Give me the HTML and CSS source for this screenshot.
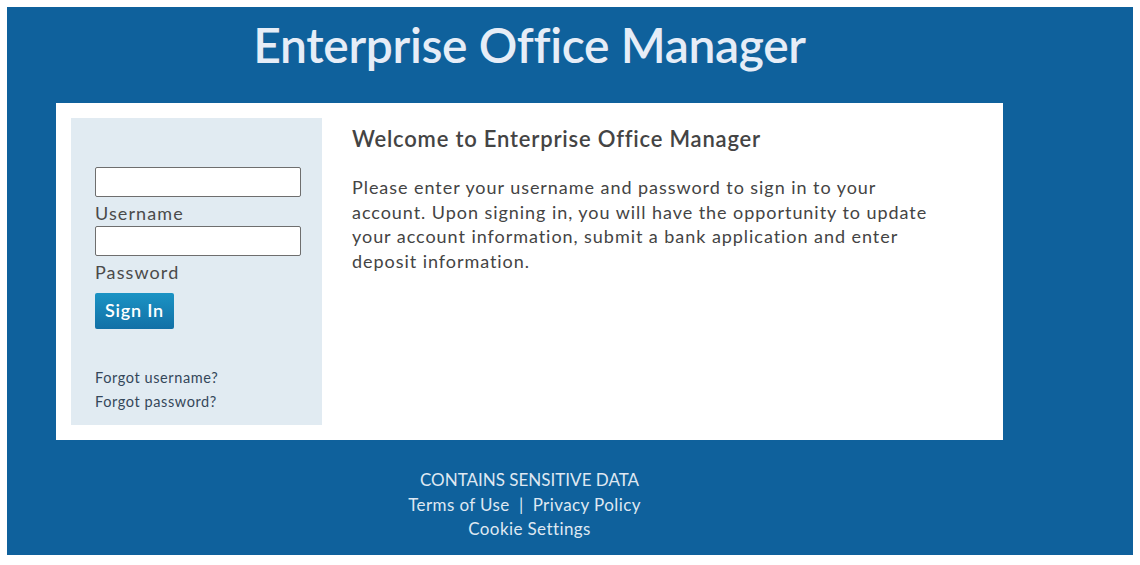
FILE: index.html
```html
<!doctype html>
<html>
<head>
<meta charset="utf-8">
<link rel="stylesheet" href="styles.css">
<title>Enterprise Office Manager</title>
</head>
<body>
<div class="page">
  <div class="wrap">
    <h1 class="masthead">Enterprise Office Manager</h1>

    <div class="card">
      <form class="login">
        <input class="field" type="text" id="username">
        <label for="username">Username</label>
        <input class="field" type="password" id="password">
        <label for="password">Password</label>
        <button class="btn" type="button">Sign In</button>
        <ul class="forgot">
          <li><a href="#">Forgot username?</a></li>
          <li><a href="#">Forgot password?</a></li>
        </ul>
      </form>

      <div class="welcome">
        <h2>Welcome to Enterprise Office Manager</h2>
        <p>Please enter your username and password to sign in to your
        account. Upon signing in, you will have the opportunity to update
        your account information, submit a bank application and enter
        deposit information.</p>
      </div>
    </div>

    <div class="footer">
      <div>CONTAINS SENSITIVE DATA</div>
      <div class="links"><a href="#">Terms of Use</a> <span class="sep">|</span> <a href="#">Privacy Policy</a></div>
      <div><a href="#">Cookie Settings</a></div>
    </div>
  </div>
</div>
</body>
</html>
```

FILE: styles.css
```css
h1,
h2,
p,
ul {
    margin: 0;
    padding: 0;
}
body {
    margin: 7px 7px 10px 7px;
    font-family: Lato, "Open Sans", sans-serif;
    color: #444;
}
.page {
    background: #0f619c;
    height: 548px;
}
.wrap {
    width: 947px;
    margin-left: 49px;
}
.masthead {
    color: #e6edf7;
    font-size: 48px;
    font-weight: 600;
    letter-spacing: -0.35px;
    line-height: 58px;
    text-align: center;
    padding: 9px 0 29px;
}
.card {
    display: flex;
    background: #fff;
    padding: 15px;
    height: 307px;
}
.login {
    width: 251px;
    box-sizing: border-box;
    background: #e1ebf2;
    padding: 49px 21px 0 24px;
    display: flex;
    flex-direction: column;
    align-items: flex-start;
}
.field {
    width: 206px;
    height: 30px;
    box-sizing: border-box;
    margin: 0;
    border: 1px solid #6e6e6e;
    border-radius: 2px;
    background: #fff;
}
.login label {
    font-size: 18px;
    letter-spacing: 1.1px;
    line-height: 26px;
    padding-top: 3px;
    color: #4a4a4a;
}
.btn {
    margin-top: 8px;
    width: 79px;
    height: 36px;
    border: 0;
    border-radius: 2px;
    background: linear-gradient(#1b93c4, #1270a6);
    color: #fff;
    font-family: Lato, sans-serif;
    font-size: 18px;
    font-weight: 600;
    letter-spacing: 0.8px;
    padding: 0 0 3px;
}
.forgot {
    list-style: none;
    margin-top: 37px;
}
.forgot li {
    font-size: 14.5px;
    letter-spacing: 0.6px;
    line-height: 24px;
}
.forgot a {
    color: #34475a;
    text-decoration: none;
}
.welcome {
    flex: 1;
    padding: 6px 30px 0 30px;
}
.welcome h2 {
    font-size: 22px;
    font-weight: 600;
    letter-spacing: 0.8px;
    color: #444;
    line-height: 30px;
    margin-bottom: 21px;
}
.welcome p {
    font-size: 18px;
    letter-spacing: 0.95px;
    line-height: 24.5px;
    max-width: 590px;
}
.footer {
    padding-top: 28px;
    text-align: center;
    font-size: 17px;
    line-height: 24.5px;
    color: #dfe8f2;
}
.footer a {
    color: #dfe8f2;
    text-decoration: none;
    letter-spacing: 0.4px;
}
.links {
    padding-right: 10px;
}
.sep {
    margin: 0 5px;
}
```
